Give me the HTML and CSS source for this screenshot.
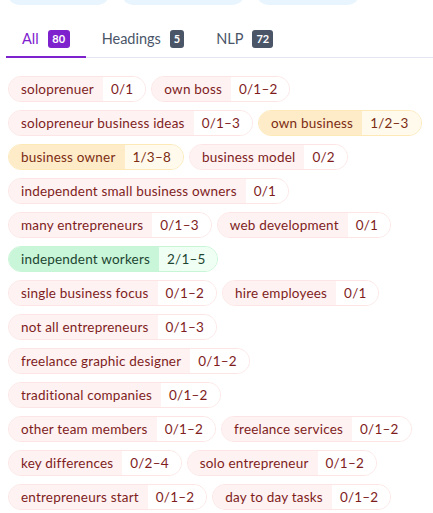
FILE: index.html
```html
<!DOCTYPE html>
<html lang="en">
<head>
  <meta charset="UTF-8">
  <title>Keywords</title>
  <meta name="viewport" content="width=device-width, initial-scale=1">
  <link rel="stylesheet" href="styles.css">
</head>
<body>
  <div class="filters">
    <span class="filter f1"></span>
    <span class="filter f2"></span>
    <span class="filter f3"></span>
  </div>

  <div class="tabs">
    <div class="tab active">All <span class="badge">80</span></div>
    <div class="tab">Headings <span class="badge">5</span></div>
    <div class="tab">NLP <span class="badge">72</span></div>
  </div>

  <div class="terms">
    <span class="term"><span class="name">soloprenuer</span><span class="count">0/1</span></span>
    <span class="term"><span class="name">own boss</span><span class="count">0/1–2</span></span>
    <span class="term"><span class="name">solopreneur business ideas</span><span class="count">0/1–3</span></span>
    <span class="term warn"><span class="name">own business</span><span class="count">1/2–3</span></span>
    <span class="term warn"><span class="name">business owner</span><span class="count">1/3–8</span></span>
    <span class="term"><span class="name">business model</span><span class="count">0/2</span></span>
    <span class="term"><span class="name">independent small business owners</span><span class="count">0/1</span></span>
    <span class="term"><span class="name">many entrepreneurs</span><span class="count">0/1–3</span></span>
    <span class="term"><span class="name">web development</span><span class="count">0/1</span></span>
    <span class="term ok"><span class="name">independent workers</span><span class="count">2/1–5</span></span>
    <span class="term"><span class="name">single business focus</span><span class="count">0/1–2</span></span>
    <span class="term"><span class="name">hire employees</span><span class="count">0/1</span></span>
    <span class="term"><span class="name">not all entrepreneurs</span><span class="count">0/1–3</span></span>
    <span class="term"><span class="name">freelance graphic designer</span><span class="count">0/1–2</span></span>
    <span class="term"><span class="name">traditional companies</span><span class="count">0/1–2</span></span>
    <span class="term"><span class="name">other team members</span><span class="count">0/1–2</span></span>
    <span class="term"><span class="name">freelance services</span><span class="count">0/1–2</span></span>
    <span class="term"><span class="name">key differences</span><span class="count">0/2–4</span></span>
    <span class="term"><span class="name">solo entrepreneur</span><span class="count">0/1–2</span></span>
    <span class="term"><span class="name">entrepreneurs start</span><span class="count">0/1–2</span></span>
    <span class="term"><span class="name">day to day tasks</span><span class="count">0/1–2</span></span>
  </div>
</body>
</html>
```

FILE: styles.css
```css
body {
  margin: 0; padding: 0;
  background: #fff;
  font-family: Lato, "Noto Sans", sans-serif;
  overflow: hidden;
}

/* cut-off filter chips above the tabs */
.filters {
  display: flex; gap: 11px;
  margin-top: -21px; padding-left: 7px;
}
.filter {
  height: 26px; border-radius: 13px;
  background: #e8f5fe;
}
.f1 { width: 103px; }
.f2 { width: 124px; }
.f3 { width: 104px; }

.tabs {
  display: flex;
  margin: 16px 0 0 6px;
  border-bottom: 1px solid #e4e5f1;
}
.tab {
  display: flex; align-items: center; gap: 9px;
  padding: 0 16px;
  font-size: 14.5px; color: #4a5568;
  margin-bottom: -1px;
  border-bottom: 2px solid transparent;
  box-sizing: border-box; height: 37px;
}
.tab.active { color: #7e22ce; border-bottom-color: #7e22ce; }
.badge {
  display: inline-flex; align-items: center; justify-content: center;
  min-width: 14px; height: 18px; padding: 0 4px; box-sizing: border-box;
  border-radius: 3px;
  background: #4a5568; color: #fff;
  font-size: 11px; font-weight: bold;
}
.tab.active .badge { background: #7e22ce; min-width: 22px; }

.terms {
  display: flex; flex-wrap: wrap;
  gap: 8px 5px;
  padding: 18px 8px 0 8px;
}
.term {
  display: inline-flex;
  height: 26px; box-sizing: border-box;
  border: 1px solid #fde5e5; border-radius: 13px;
  overflow: hidden;
  font-size: 13.5px; color: #7f1d1d;
  letter-spacing: .2px;
}
.term .name, .term .count {
  display: flex; align-items: center;
}
.term .name { background: #fef2f2; padding: 0 9px 0 12px; }
.term .count { background: #fff; padding: 0 12px 0 8px; }

.term.warn { border-color: #fde9b8; color: #7c2d12; }
.term.warn .name { background: #feebc8; }
.term.warn .count { background: #fffaeb; }

.term.ok { border-color: #c6f6d5; color: #1c4532; }
.term.ok .name { background: #c9f5d8; }
.term.ok .count { background: #f0fff4; }
```
